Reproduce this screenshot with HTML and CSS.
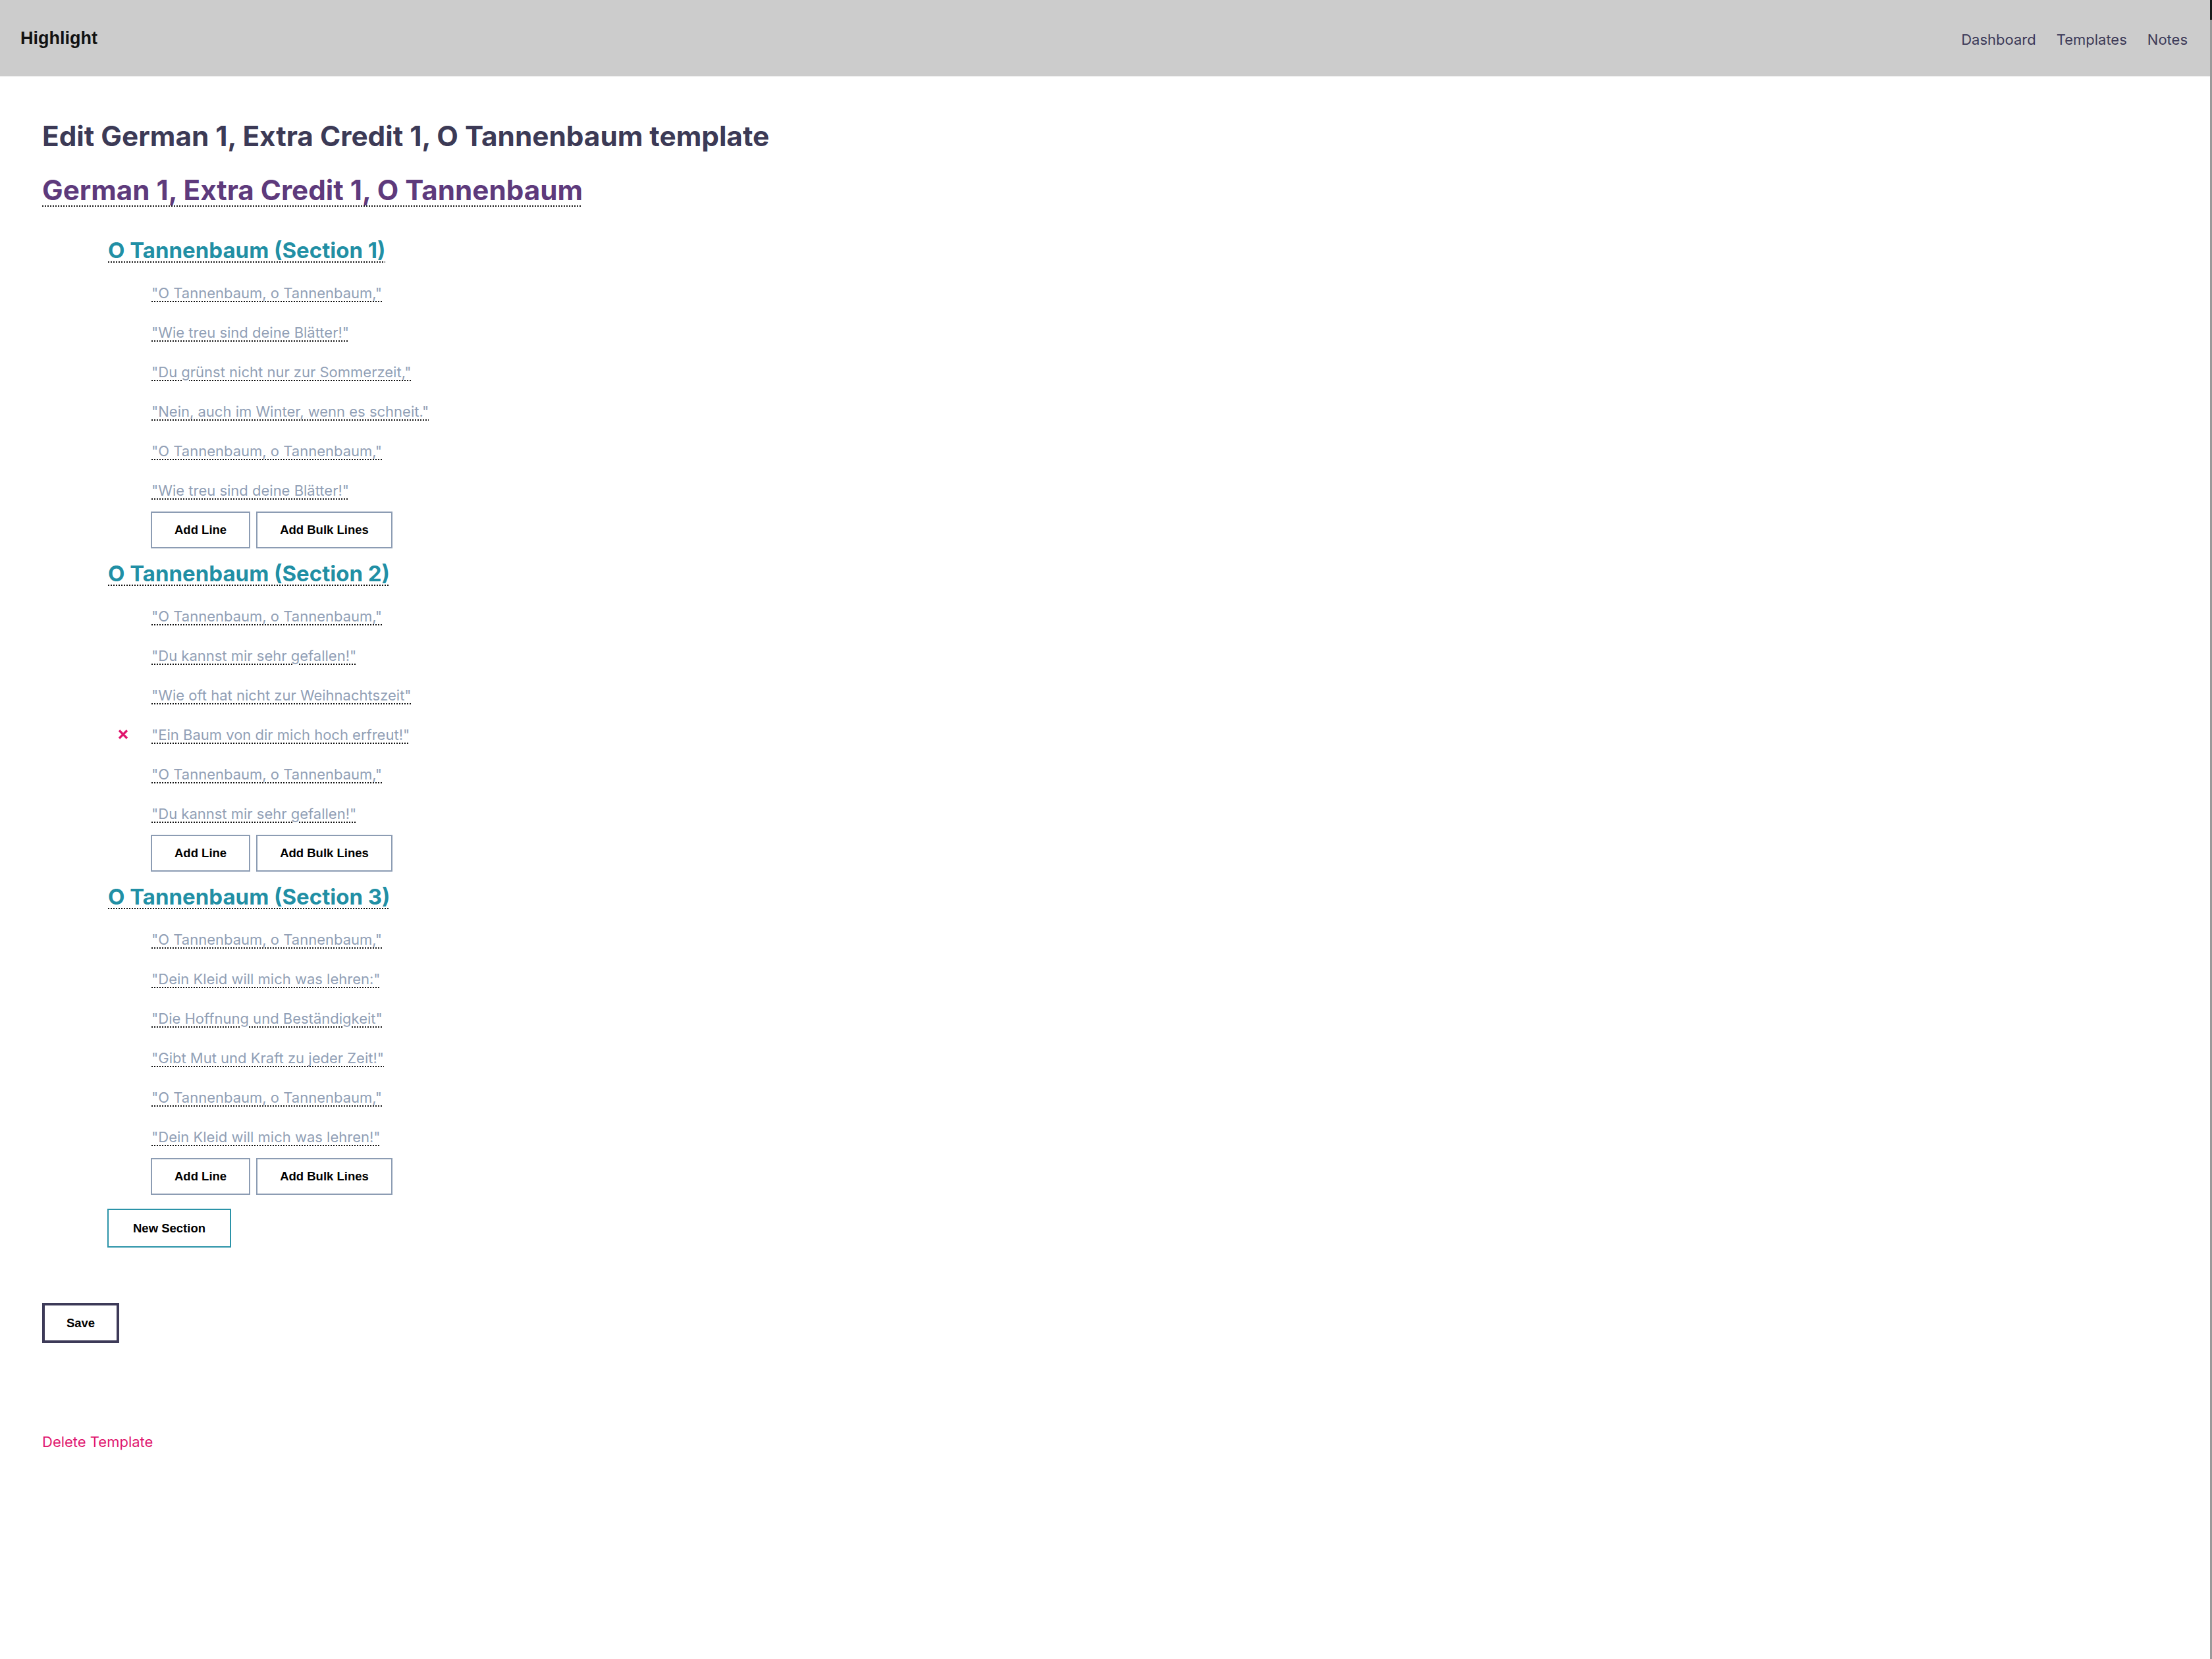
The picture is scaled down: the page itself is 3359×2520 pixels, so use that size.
FILE: index.html
```html
<!DOCTYPE html>
<html lang="de">
<head>
<meta charset="utf-8">
<title>Edit German 1, Extra Credit 1, O Tannenbaum template</title>
<link rel="stylesheet" href="styles.css">
</head>
<body>
<header class="topbar">
  <a class="brand" href="#">Highlight</a>
  <nav class="nav">
    <a href="#">Dashboard</a>
    <a href="#">Templates</a>
    <a href="#">Notes</a>
  </nav>
</header>
<main class="page">
  <h1 class="page-title">Edit German 1, Extra Credit 1, O Tannenbaum template</h1>
  <h2 class="template-name"><a href="#">German 1, Extra Credit 1, O Tannenbaum</a></h2>

  <section class="section">
    <h3 class="section-title"><a href="#">O Tannenbaum (Section 1)</a></h3>
    <ul class="lines">
      <li class="line"><span class="gutter"></span><a class="line-text" href="#">"O Tannenbaum, o Tannenbaum,"</a></li>
      <li class="line"><span class="gutter"></span><a class="line-text" href="#">"Wie treu sind deine Blätter!"</a></li>
      <li class="line"><span class="gutter"></span><a class="line-text" href="#">"Du grünst nicht nur zur Sommerzeit,"</a></li>
      <li class="line"><span class="gutter"></span><a class="line-text" href="#">"Nein, auch im Winter, wenn es schneit."</a></li>
      <li class="line"><span class="gutter"></span><a class="line-text" href="#">"O Tannenbaum, o Tannenbaum,"</a></li>
      <li class="line"><span class="gutter"></span><a class="line-text" href="#">"Wie treu sind deine Blätter!"</a></li>
    </ul>
    <div class="line-actions">
      <button class="btn btn-line">Add Line</button>
      <button class="btn btn-line">Add Bulk Lines</button>
    </div>
  </section>

  <section class="section">
    <h3 class="section-title"><a href="#">O Tannenbaum (Section 2)</a></h3>
    <ul class="lines">
      <li class="line"><span class="gutter"></span><a class="line-text" href="#">"O Tannenbaum, o Tannenbaum,"</a></li>
      <li class="line"><span class="gutter"></span><a class="line-text" href="#">"Du kannst mir sehr gefallen!"</a></li>
      <li class="line"><span class="gutter"></span><a class="line-text" href="#">"Wie oft hat nicht zur Weihnachtszeit"</a></li>
      <li class="line"><span class="gutter"><svg class="remove" viewBox="0 0 16 15" width="16" height="15" aria-label="Remove"><path d="M2 1.5 L14 13.5 M14 1.5 L2 13.5" stroke="#e0156d" stroke-width="3.4" fill="none"/></svg></span><a class="line-text" href="#">"Ein Baum von dir mich hoch erfreut!"</a></li>
      <li class="line"><span class="gutter"></span><a class="line-text" href="#">"O Tannenbaum, o Tannenbaum,"</a></li>
      <li class="line"><span class="gutter"></span><a class="line-text" href="#">"Du kannst mir sehr gefallen!"</a></li>
    </ul>
    <div class="line-actions">
      <button class="btn btn-line">Add Line</button>
      <button class="btn btn-line">Add Bulk Lines</button>
    </div>
  </section>

  <section class="section">
    <h3 class="section-title"><a href="#">O Tannenbaum (Section 3)</a></h3>
    <ul class="lines">
      <li class="line"><span class="gutter"></span><a class="line-text" href="#">"O Tannenbaum, o Tannenbaum,"</a></li>
      <li class="line"><span class="gutter"></span><a class="line-text" href="#">"Dein Kleid will mich was lehren:"</a></li>
      <li class="line"><span class="gutter"></span><a class="line-text" href="#">"Die Hoffnung und Beständigkeit"</a></li>
      <li class="line"><span class="gutter"></span><a class="line-text" href="#">"Gibt Mut und Kraft zu jeder Zeit!"</a></li>
      <li class="line"><span class="gutter"></span><a class="line-text" href="#">"O Tannenbaum, o Tannenbaum,"</a></li>
      <li class="line"><span class="gutter"></span><a class="line-text" href="#">"Dein Kleid will mich was lehren!"</a></li>
    </ul>
    <div class="line-actions">
      <button class="btn btn-line">Add Line</button>
      <button class="btn btn-line">Add Bulk Lines</button>
    </div>
  </section>

  <div class="new-section-row">
    <button class="btn btn-section">New Section</button>
  </div>

  <div class="save-row">
    <button class="btn btn-save">Save</button>
  </div>

  <a class="delete" href="#">Delete Template</a>
</main>
<div class="window-edge"></div>
</body>
</html>
```

FILE: styles.css
```css
html, body {
  margin: 0;
  padding: 0;
  background: #ffffff;
}

body {
  font-family: Inter, "Noto Sans", sans-serif;
  color: #3c3a56;
  min-height: 2520px;
  position: relative;
}

a {
  text-decoration: none;
  color: inherit;
}

.topbar {
  height: 116px;
  background: #cccccc;
  display: flex;
  align-items: center;
  justify-content: space-between;
  padding: 0 37px 0 31px;
  box-sizing: border-box;
}

.brand {
  font-family: "Liberation Sans", Arial, sans-serif;
  font-weight: 700;
  font-size: 27px;
  color: #111111;
}

.nav {
  display: flex;
  gap: 31px;
  padding-top: 4px;
}

.nav a {
  font-family: Inter, sans-serif;
  font-size: 22px;
  color: #3d3a58;
}

.page {
  padding-left: 64px;
}

.page-title {
  margin: 65px 0 0;
  font-size: 42.3px;
  font-weight: 700;
  line-height: normal;
  color: #3c3a56;
}

.template-name {
  margin: 31px 0 0;
  font-size: 42.2px;
  font-weight: 700;
  line-height: normal;
}

.template-name a {
  color: #5e3a7c;
  text-decoration: underline dotted #111111;
  text-decoration-thickness: 2px;
  text-underline-offset: 8px;
}

.section {
  padding-left: 100px;
  margin-top: 18px;
}

.template-name + .section {
  margin-top: 46px;
}

.section-title {
  margin: 0 0 15px;
  font-size: 33px;
  font-weight: 700;
  line-height: normal;
}

.section-title a {
  color: #218fa5;
  text-decoration: underline dotted #111111;
  text-decoration-thickness: 2px;
  text-underline-offset: 5px;
}

.lines {
  list-style: none;
  margin: 0;
  padding: 0;
}

.line {
  display: grid;
  grid-template-columns: 66px auto;
  justify-content: start;
  align-items: center;
  height: 60px;
  font-size: 22px;
  line-height: 60px;
}

.gutter {
  display: flex;
  align-items: center;
  padding-left: 15px;
  height: 60px;
}

.remove {
  display: block;
  margin-top: -2px;
}

.line-text {
  color: #919fb6;
  text-decoration: underline dotted #111111;
  text-decoration-thickness: 2px;
  text-underline-offset: 4px;
}

.line-actions {
  display: flex;
  gap: 9px;
  margin: 2px 0 0 65px;
}

.btn {
  font-family: "Liberation Sans", Arial, sans-serif;
  font-weight: 700;
  font-size: 18.5px;
  color: #000000;
  background: #ffffff;
  box-sizing: border-box;
  cursor: pointer;
}

.btn-line {
  height: 56px;
  padding: 0 34px;
  border: 2px solid #8c9cb3;
}

.new-section-row {
  margin: 21px 0 0 99px;
}

.btn-section {
  height: 59px;
  padding: 0 37px;
  border: 2px solid #2b93a8;
}

.save-row {
  margin-top: 84px;
}

.btn-save {
  height: 61px;
  width: 117px;
  padding: 0;
  border: 4px solid #3d3a58;
}

.delete {
  display: inline-block;
  margin-top: 137px;
  font-size: 22px;
  line-height: normal;
  color: #e0176e;
}

.window-edge {
  position: absolute;
  top: 0;
  right: 0;
  width: 3px;
  height: 2520px;
  background: #9a9a9a;
  border-top: 30px solid #1a1a1a;
  box-sizing: border-box;
}
```
